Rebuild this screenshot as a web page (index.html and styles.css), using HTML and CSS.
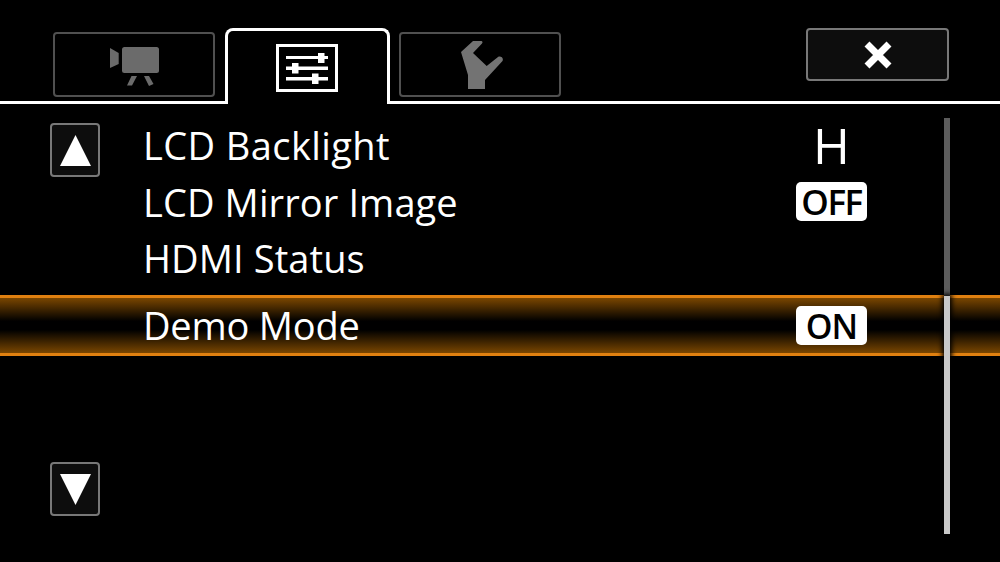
FILE: index.html
```html
<!DOCTYPE html>
<html lang="en">
<head>
<meta charset="utf-8">
<title>Menu</title>
<link rel="stylesheet" href="styles.css">
</head>
<body>
<div class="screen">
  <header class="tabbar">
    <div class="tab">
      <svg class="tab-icon" width="52" height="42" viewBox="0 0 52 42"><path d="M0 4L8.700 9V20L0 24Z" fill="#6b6b6b"/><rect x="12" y="3" width="37" height="26" rx="2.500" fill="#6b6b6b"/><path d="M21.500 32H27L22 41.500H17Z M34 32H39L43.500 40L39 42Z" fill="#6b6b6b"/></svg>
    </div>
    <div class="tab tab-active">
      <svg class="tab-glyph" width="62" height="48" viewBox="0 0 62 48"><rect x="1.500" y="1.500" width="59" height="45" fill="none" stroke="#fff" stroke-width="3"/><g fill="#fff"><rect x="10" y="12" width="42" height="3"/><rect x="42" y="9" width="6.500" height="10"/><rect x="10" y="22.500" width="42" height="3.500"/><rect x="16" y="19" width="6.500" height="10.500"/><rect x="10" y="33" width="42" height="3.500"/><rect x="36" y="29.500" width="6.500" height="10.500"/></g></svg>
    </div>
    <div class="tab">
      <svg class="tab-icon" width="42" height="49" viewBox="0 0 42 49"><path d="M12 1H20C21.500 1 22 2.500 21 3.500L12 13L25.700 26L37 17C39.500 15.500 43 18 41.500 21L24 40V49H7V35L0 12Z" fill="#737373"/></svg>
    </div>
    <button class="close" type="button">
      <svg width="32" height="32" viewBox="0 0 32 32"><path d="M5 5L27 27M27 5L5 27" stroke="#fff" stroke-width="7" stroke-linecap="butt" fill="none"/></svg>
    </button>
  </header>
  <main class="content">
    <div class="arrows">
      <button class="arrow" type="button"><svg width="31" height="31" viewBox="0 0 32 32"><path d="M16 0L32 32H0Z" fill="#fff"/></svg></button>
      <button class="arrow" type="button"><svg width="31" height="31" viewBox="0 0 32 32"><path d="M0 0H32L16 32Z" fill="#fff"/></svg></button>
    </div>
    <ul class="menu">
      <li class="row"><span class="label label-wide">LCD Backlight</span><span class="value value-plain">H</span></li>
      <li class="row"><span class="label">LCD Mirror Image</span><span class="value value-pill value-off">OFF</span></li>
      <li class="row"><span class="label">HDMI Status</span></li>
      <li class="row row-selected"><span class="label label-tight">Demo Mode</span><span class="value value-pill value-on">ON</span></li>
    </ul>
    <div class="scrollbar"><div class="scroll-thumb"></div></div>
  </main>
</div>
</body>
</html>
```
FILE: styles.css
```css
* { box-sizing: border-box; }
html, body { margin: 0; background: #000; }
.screen {
  width: 1000px;
  height: 562px;
  overflow: hidden;
  background: #000;
  color: #fff;
  font-family: "Open Sans", "Noto Sans", sans-serif;
}
.tabbar {
  height: 104px;
  display: flex;
  align-items: flex-start;
  padding: 28px 51px 0 53px;
  border-bottom: 3px solid #fff;
}
.tab {
  width: 162px;
  height: 65px;
  margin: 4px 10px 0 0;
  display: flex;
  align-items: center;
  justify-content: center;
  border: 2px solid #505050;
  border-radius: 4px;
}
.tab-icon { margin-left: 4px; }
.tab-active {
  width: 165px;
  height: 76px;
  margin: 0 9px -3px 0;
  border: 3px solid #fff;
  border-bottom: 0;
  border-radius: 8px 8px 0 0;
  background: #000;
  padding-top: 1px;
}
.tab-glyph { margin-left: -2px; }
.close {
  width: 143px;
  height: 53px;
  margin-left: auto;
  padding: 0;
  display: flex;
  align-items: center;
  justify-content: center;
  background: #0d0d0d;
  border: 2px solid #787878;
  border-radius: 4px;
}
.content {
  position: relative;
  height: 458px;
  display: flex;
}
.arrows {
  width: 144px;
  padding: 19px 0 0 50px;
  display: flex;
  flex-direction: column;
  gap: 285px;
}
.arrow {
  width: 50px;
  height: 54px;
  padding: 0;
  display: flex;
  align-items: center;
  justify-content: center;
  background: #0d0d0d;
  border: 2px solid #787878;
  border-radius: 4px;
}
.menu {
  flex: 1;
  margin: 0 0 0 -144px;
  padding: 13px 0 0;
  list-style: none;
}
.row {
  height: 56.500px;
  padding: 0 133px 0 143px;
  display: flex;
  align-items: center;
  justify-content: space-between;
  font-size: 38px;
  line-height: 1;
}
.label { letter-spacing: 0.1px; }
.label-wide { letter-spacing: 0.4px; }
.label-tight { letter-spacing: -0.2px; margin-top: -2px; }
.row-selected {
  height: 61px;
  margin-top: 8.500px;
  border-top: 3px solid #e08010;
  border-bottom: 3px solid #e08010;
  background: linear-gradient(#7a4600 0, #000 42%, #000 58%, #7a4600 100%);
}
.value {
  width: 71px;
  text-align: center;
}
.value-plain { font-size: 50px; }
.value-pill {
  height: 39px;
  display: flex;
  align-items: center;
  justify-content: center;
  background: #fff;
  color: #000;
  border-radius: 5px;
  font-size: 35px;
  font-weight: 600;
}
.value-off { letter-spacing: -1.500px; }
.value-on { font-size: 34px; letter-spacing: -1px; }
.scrollbar {
  position: absolute;
  left: 944px;
  top: 14px;
  width: 6px;
  height: 416px;
  padding-top: 178px;
  background: #5c5c5c;
}
.scroll-thumb {
  height: 238px;
  background: #c8c8c8;
  box-shadow: 0 0 5px 2px #000;
}
```
